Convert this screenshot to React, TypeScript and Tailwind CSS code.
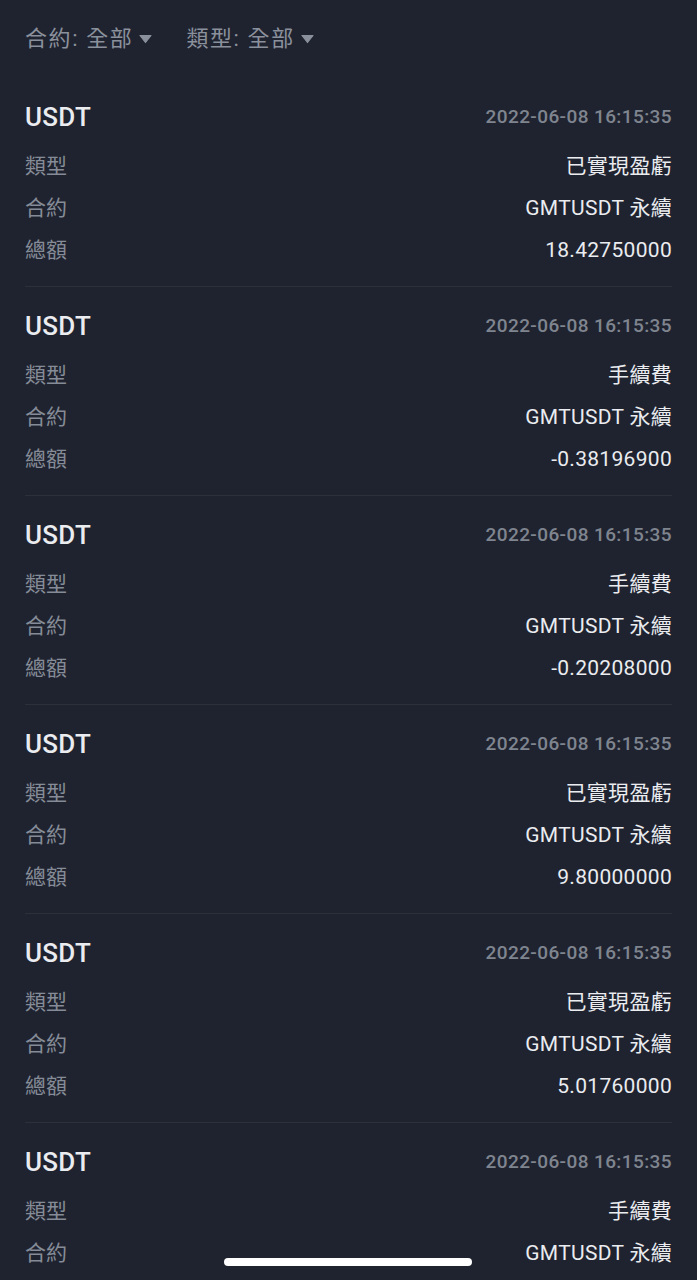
import React from "react";

const rows = [
  { type: "已實現盈虧", amount: "18.42750000" },
  { type: "手續費", amount: "-0.38196900" },
  { type: "手續費", amount: "-0.20208000" },
  { type: "已實現盈虧", amount: "9.80000000" },
  { type: "已實現盈虧", amount: "5.01760000" },
  { type: "手續費", amount: "" },
];

const font = "font-['Roboto','Noto_Sans_CJK_TC',sans-serif]";

function Caret() {
  return (
    <svg width="13" height="10" viewBox="0 0 13 10" className="ml-[6px] mt-[1px]">
      <path d="M1 1.5 H12 L6.5 8.5 Z" fill="#8b919c" stroke="#8b919c" strokeWidth="1.2" strokeLinejoin="round" />
    </svg>
  );
}

function Card({ type, amount }: { type: string; amount: string }) {
  return (
    <div className="border-b border-[#2b3039] pt-[24px] pb-[14px]">
      <div className="flex h-[30px] items-center justify-between">
        <span className="text-[26px] font-medium tracking-[0.3px] text-[#eaecef]">USDT</span>
        <span className="text-[19px] font-medium tracking-[0.4px] text-[#7f858f]">2022-06-08 16:15:35</span>
      </div>
      <div className="mt-[14px]">
        <div className="flex h-[42px] items-center justify-between">
          <span className="text-[21px] text-[#868c97]">類型</span>
          <span className="text-[21px] tracking-[0.3px] text-[#eaecef]">{type}</span>
        </div>
        <div className="flex h-[42px] items-center justify-between">
          <span className="text-[21px] text-[#868c97]">合約</span>
          <span className="text-[21px] tracking-[0.3px] text-[#eaecef]">GMTUSDT 永續</span>
        </div>
        {amount && (
          <div className="flex h-[42px] items-center justify-between">
            <span className="text-[21px] text-[#868c97]">總額</span>
            <span className="text-[21px] tracking-[0.3px] text-[#eaecef]">{amount}</span>
          </div>
        )}
      </div>
    </div>
  );
}

export default function App() {
  return (
    <div className={`relative h-[1280px] w-full overflow-hidden bg-[#1f2330] ${font}`}>
      <div className="px-[25px]">
        <div className="flex h-[78px] items-center pb-[2px] text-[22px] tracking-[1.6px] text-[#8b919c]">
          <div className="flex items-center">
            <span>合約: 全部</span>
            <Caret />
          </div>
          <div className="ml-[34px] flex items-center">
            <span>類型: 全部</span>
            <Caret />
          </div>
        </div>
        {rows.map((r, i) => (
          <Card key={i} type={r.type} amount={r.amount} />
        ))}
      </div>
      <div className="absolute bottom-[14px] left-[224px] h-[8px] w-[248px] rounded-full bg-white" />
    </div>
  );
}
